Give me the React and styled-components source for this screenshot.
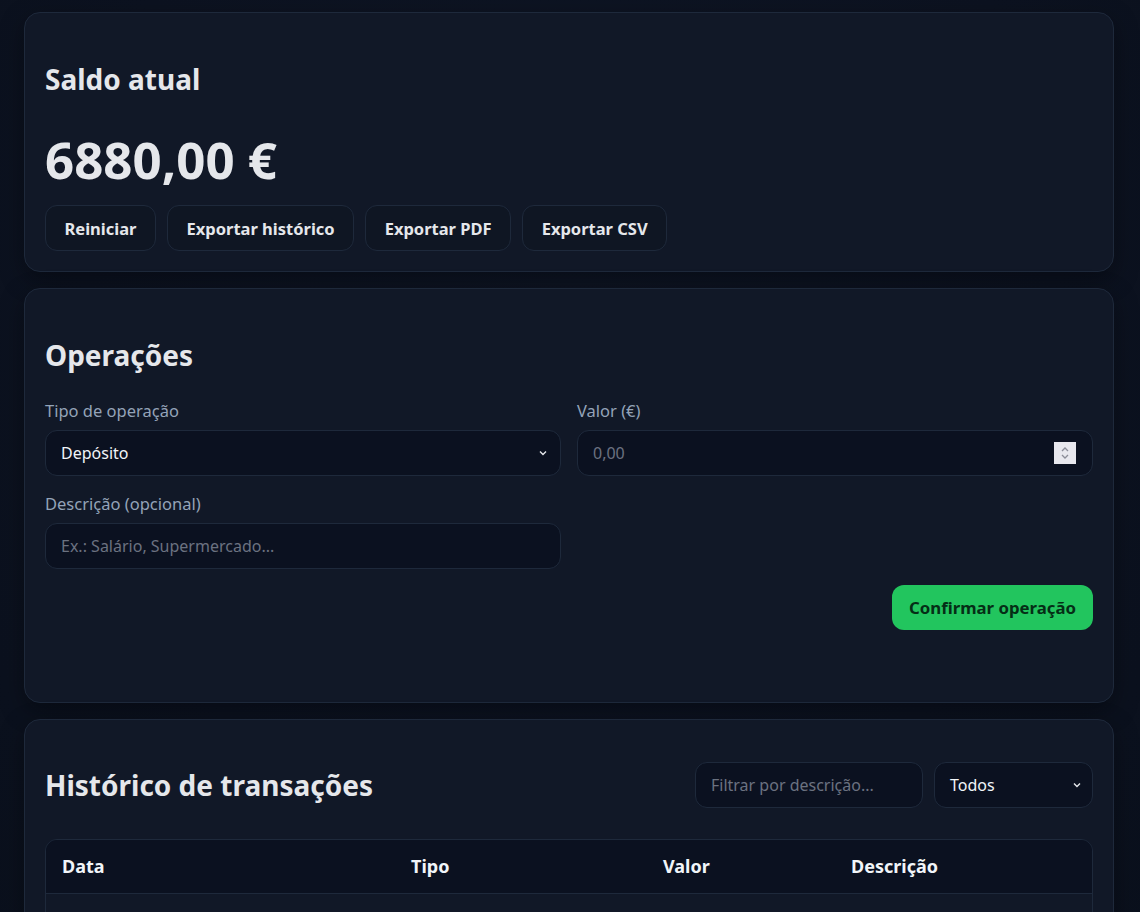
import React from 'react'
import styled, { createGlobalStyle } from 'styled-components'

const GlobalStyle = createGlobalStyle`
	* { box-sizing: border-box; }
	html, body {
		margin: 0;
		background: #0c1220;
		color: #e5e7eb;
		font-family: "Noto Sans", "Open Sans", Arial, sans-serif;
	}
`

const Page = styled.div`
	min-height: 912px;
	padding: 12px 26px 24px 24px;
	display: flex;
	flex-direction: column;
	gap: 16px;
	background: radial-gradient(ellipse at 50% 30%, #0e1524 0%, #0c1220 60%, #0a101c 100%);
`

const Card = styled.section`
	background: #111827;
	border: 1px solid #1e293b;
	border-radius: 16px;
	padding: 20px 20px ${p => p.padBottom || '20px'};
	box-shadow: 0 8px 24px rgba(0, 0, 0, 0.35);
`

const Title = styled.h2`
	margin: ${p => (p.flush ? '0' : '28px 0 0')};
	font-size: 28px;
	line-height: 36px;
	font-weight: 700;
	color: #e5e7eb;
`

const Amount = styled.div`
	margin: 32px 0 16px;
	font-size: 51px;
	line-height: 60px;
	font-weight: 700;
	color: #e5e7eb;
`

const ButtonRow = styled.div`
	display: flex;
	gap: 11px;
`

const GhostBtn = styled.button`
	height: 46px;
	padding: 0 18.5px;
	border-radius: 12px;
	border: 1px solid #1e293b;
	background: #0f1623;
	color: #e5e7eb;
	font-family: inherit;
	font-size: 16.5px;
	font-weight: 700;
`

const FormGrid = styled.div`
	display: grid;
	grid-template-columns: 1fr 1fr;
	column-gap: 16px;
	row-gap: 16px;
	margin-top: 26px;
`

const Field = styled.label`
	display: flex;
	flex-direction: column;
	gap: 8px;
	font-size: 16.5px;
	color: #94a3b8;
`

const InputBox = styled.div`
	height: 46px;
	border: 1px solid #1e293b;
	border-radius: 12px;
	background: #0b1120;
	display: flex;
	align-items: center;
	padding: 0 ${p => p.padRight || '14px'} 0 15px;
	font-size: 16px;
	color: ${p => (p.placeholder ? '#6b7280' : '#f1f5f9')};
	width: ${p => p.width || 'auto'};
`

const BoxText = styled.span`
	flex: 1;
	white-space: nowrap;
`

const Spinner = styled.span`
	width: 22px;
	height: 22px;
	background: #e8e8ee;
	display: flex;
	align-items: center;
	justify-content: center;
`

const Actions = styled.div`
	display: flex;
	justify-content: flex-end;
	margin-top: 16px;
`

const PrimaryBtn = styled.button`
	height: 45px;
	padding: 0 17px;
	border: none;
	border-radius: 12px;
	background: #22c55e;
	color: #052e16;
	font-family: inherit;
	font-size: 16.8px;
	font-weight: 700;
`

const HeaderRow = styled.div`
	display: flex;
	align-items: center;
	justify-content: space-between;
	margin-top: 22px;
`

const Filters = styled.div`
	display: flex;
	gap: 11px;
`

const TableWrap = styled.div`
	margin-top: 31px;
	border: 1px solid #1e293b;
	border-radius: 12px;
	overflow: hidden;
`

const Table = styled.table`
	width: 100%;
	border-collapse: collapse;
	table-layout: fixed;
`

const Th = styled.th`
	text-align: left;
	padding: 0 16px;
	height: 53px;
	background: #0b1120;
	border-bottom: 1px solid #1e293b;
	font-size: 18px;
	font-weight: 700;
	color: #f1f5f9;
	width: ${p => p.w};
`

const EmptyCell = styled.td`
	height: 60px;
`

const Chevron = () => (
	<svg width="10" height="10" viewBox="0 0 10 10" fill="none">
		<path d="M2 3.5 L5 6.5 L8 3.5" stroke="#e5e7eb" strokeWidth="1.4" />
	</svg>
)

const SpinIcon = () => (
	<svg width="10" height="16" viewBox="0 0 10 16" fill="none">
		<path d="M2 6 L5 3 L8 6 M2 10 L5 13 L8 10" stroke="#8b8d98" strokeWidth="1.3" />
	</svg>
)

export default function App() {
	return (
		<Page>
			<GlobalStyle />
			<Card>
				<Title>Saldo atual</Title>
				<Amount>6880,00 €</Amount>
				<ButtonRow>
					<GhostBtn>Reiniciar</GhostBtn>
					<GhostBtn>Exportar histórico</GhostBtn>
					<GhostBtn>Exportar PDF</GhostBtn>
					<GhostBtn>Exportar CSV</GhostBtn>
				</ButtonRow>
			</Card>

			<Card padBottom="72px">
				<Title>Operações</Title>
				<FormGrid>
					<Field>
						Tipo de operação
						<InputBox padRight="12px">
							<BoxText>Depósito</BoxText>
							<Chevron />
						</InputBox>
					</Field>
					<Field>
						Valor (€)
						<InputBox placeholder padRight="16px">
							<BoxText>0,00</BoxText>
							<Spinner><SpinIcon /></Spinner>
						</InputBox>
					</Field>
					<Field>
						Descrição (opcional)
						<InputBox placeholder>
							<BoxText>Ex.: Salário, Supermercado...</BoxText>
						</InputBox>
					</Field>
				</FormGrid>
				<Actions>
					<PrimaryBtn>Confirmar operação</PrimaryBtn>
				</Actions>
			</Card>

			<Card>
				<HeaderRow>
					<Title flush>Histórico de transações</Title>
					<Filters>
						<InputBox placeholder width="228px">
							<BoxText>Filtrar por descrição...</BoxText>
						</InputBox>
						<InputBox width="159px" padRight="10px">
							<BoxText>Todos</BoxText>
							<Chevron />
						</InputBox>
					</Filters>
				</HeaderRow>
				<TableWrap>
					<Table>
						<thead>
							<tr>
								<Th w="349px">Data</Th>
								<Th w="252px">Tipo</Th>
								<Th w="188px">Valor</Th>
								<Th>Descrição</Th>
							</tr>
						</thead>
						<tbody>
							<tr><EmptyCell colSpan="4" /></tr>
						</tbody>
					</Table>
				</TableWrap>
			</Card>
		</Page>
	)
}
